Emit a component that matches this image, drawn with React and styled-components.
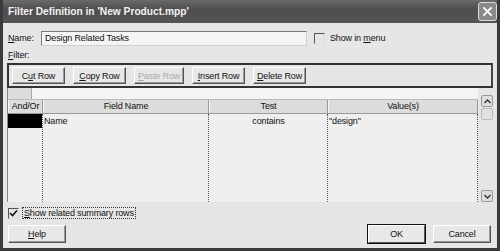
import React from "react";
import styled, { createGlobalStyle } from "styled-components";

const Global = createGlobalStyle`
  html, body { margin: 0; padding: 0; background: #2a2a2a; }
  * { box-sizing: border-box; }
`;

const Window = styled.div`
  width: 500px;
  height: 251px;
  background: #3a3a3a;
  padding: 0 3px 3px 3px;
  display: flex;
  flex-direction: column;
  font-family: "Liberation Sans", Arial, sans-serif;
  font-size: 9px;
  letter-spacing: -0.15px;
  color: #111;
  overflow: hidden;
`;

const TitleBar = styled.div`
  height: 23px;
  flex: none;
  display: flex;
  align-items: center;
  justify-content: space-between;
  padding: 0 0 0 5px;
  background: linear-gradient(#6a6a6a, #4e4e4e 40%, #555 100%);
  color: #f2f2f2;
  font-weight: bold;
  font-size: 10.2px;
  letter-spacing: 0;
`;

const CloseBox = styled.div`
  width: 19px;
  height: 19px;
  border: 1px solid #ddd;
  border-radius: 3px;
  background: #8a8a8a;
  display: flex;
  align-items: center;
  justify-content: center;
`;

const Body = styled.div`
  flex: 1;
  background: #e6e6e6;
  padding: 7px 4px 5px 4px;
  display: flex;
  flex-direction: column;
`;

const NameRow = styled.div`
  display: flex;
  align-items: center;
  height: 16px;
  margin-left: 1px;
`;

const Label = styled.span`
  width: 33px;
`;

const Field = styled.div`
  width: 266px;
  height: 15px;
  background: #f4f4f4;
  border: 1px solid #7a7a7a;
  border-right-color: #cfcfcf;
  border-bottom-color: #cfcfcf;
  padding: 1px 3px;
  line-height: 11px;
`;

const Check = styled.span`
  width: 11px;
  height: 11px;
  border: 1px solid #555;
  border-right-color: #ddd;
  border-bottom-color: #ddd;
  background: #e6e6e6;
  display: inline-flex;
  align-items: center;
  justify-content: center;
  flex: none;
`;

const CheckLabel = styled.label`
  display: flex;
  align-items: center;
  gap: 3px;
  margin-left: ${(p) => p.$ml || 0}px;
  span.text {
    border: ${(p) => (p.$focus ? "1px dotted #333" : "1px solid transparent")};
    padding: 0 1px;
  }
`;

const FilterLabel = styled.div`
  margin: 4px 0 3px 1px;
`;

const Toolbar = styled.div`
  height: 25px;
  border: 2px solid #333;
  border-right-color: #444;
  display: flex;
  align-items: center;
  gap: 8px;
  padding: 0 0 0 3px;
  background: #e6e6e6;
`;

const Btn = styled.div`
  width: ${(p) => p.$w || 53}px;
  height: ${(p) => p.$h || 17}px;
  display: flex;
  align-items: center;
  justify-content: center;
  white-space: nowrap;
  background: #e8e8e8;
  border: 1px solid #fff;
  border-right-color: #555;
  border-bottom-color: #555;
  box-shadow: ${(p) => (p.$default ? "0 0 0 1px #111" : "inset -1px -1px 0 #999")};
  color: ${(p) => (p.$disabled ? "#a8a8a8" : "#111")};
`;

const GridWrap = styled.div`
  display: flex;
  height: 114px;
  border-left: 1px solid #888;
`;

const Grid = styled.div`
  width: 470px;
  background: #efefef;
  display: flex;
  flex-direction: column;
`;

const EditRow = styled.div`
  height: 12px;
  display: flex;
  border-bottom: 1px solid #bbb;
  div:first-child { width: 24px; background: #dcdcdc; border-right: 1px solid #aaa; }
  div:last-child { flex: 1; background: #f4f4f4; }
`;

const cols = [35, 166, 119, 150];

const HeaderRow = styled.div`
  height: 14px;
  display: flex;
  background: #dcdcdc;
  border-bottom: 1px solid #999;
`;

const HeadCell = styled.div`
  width: ${(p) => p.$w}px;
  text-align: center;
  line-height: 13px;
  border-right: 1px solid #999;
  border-left: 1px solid #f6f6f6;
`;

const DataRow = styled.div`
  flex: 1;
  display: flex;
`;

const Cell = styled.div`
  width: ${(p) => p.$w}px;
  border-right: 1px dotted #555;
  display: flex;
  flex-direction: column;
  text-align: ${(p) => p.$align || "left"};
  span { height: 14px; line-height: 14px; padding-left: 1px; }
`;

const Selected = styled.span`
  background: #000;
  display: block;
`;

const ScrollBar = styled.div`
  width: 12px;
  margin-left: 3px;
  display: flex;
  flex-direction: column;
  justify-content: space-between;
  padding-top: 7px;
`;

const Arrow = styled.div`
  width: 12px;
  height: 12px;
  border: 1px solid #999;
  border-radius: 2px;
  background: #dedede;
  display: flex;
  align-items: center;
  justify-content: center;
`;

const Thumb = styled.div`
  width: 12px;
  height: 12px;
  border: 1px solid #bbb;
  border-radius: 2px;
  background: #e0e0e0;
  margin-top: 1px;
`;

const BottomRow = styled.div`
  display: flex;
  align-items: center;
  margin-top: auto;
  padding: 0 2px 0 1px;
`;

const Spacer = styled.div`
  flex: 1;
`;

function Chevron({ up }) {
  return (
    <svg width="7" height="5" viewBox="0 0 7 5">
      <path d={up ? "M0.5 4 L3.5 1 L6.5 4" : "M0.5 1 L3.5 4 L6.5 1"} fill="none" stroke="#333" strokeWidth="1.4" />
    </svg>
  );
}

function Tick() {
  return (
    <svg width="9" height="9" viewBox="0 0 9 9">
      <path d="M1 4 L3.5 6.5 L8 1.5" fill="none" stroke="#111" strokeWidth="1.6" />
    </svg>
  );
}

export default function App() {
  return (
    <>
      <Global />
      <Window>
        <TitleBar>
          <span>Filter Definition in 'New Product.mpp'</span>
          <CloseBox>
            <svg width="11" height="11" viewBox="0 0 12 12">
              <path d="M1.5 1.5 L10.5 10.5 M10.5 1.5 L1.5 10.5" stroke="#fff" strokeWidth="2" />
            </svg>
          </CloseBox>
        </TitleBar>
        <Body>
          <NameRow>
            <Label><u>N</u>ame:</Label>
            <Field>Design Related Tasks</Field>
            <CheckLabel $ml={7}>
              <Check />
              <span className="text">Show in <u>m</u>enu</span>
            </CheckLabel>
          </NameRow>
          <FilterLabel><u>F</u>ilter:</FilterLabel>
          <Toolbar>
            <Btn>C<u>u</u>t Row</Btn>
            <Btn><u>C</u>opy Row</Btn>
            <Btn $disabled $w={50}><u>P</u>aste Row</Btn>
            <Btn><u>I</u>nsert Row</Btn>
            <Btn><u>D</u>elete Row</Btn>
          </Toolbar>
          <GridWrap>
            <Grid>
              <EditRow><div /><div /></EditRow>
              <HeaderRow>
                <HeadCell $w={cols[0]}>And/Or</HeadCell>
                <HeadCell $w={cols[1]}>Field Name</HeadCell>
                <HeadCell $w={cols[2]}>Test</HeadCell>
                <HeadCell $w={cols[3]}>Value(s)</HeadCell>
              </HeaderRow>
              <DataRow>
                <Cell $w={cols[0]}><Selected /></Cell>
                <Cell $w={cols[1]}><span>Name</span></Cell>
                <Cell $w={cols[2]} $align="center"><span>contains</span></Cell>
                <Cell $w={cols[3]}><span>"design"</span></Cell>
              </DataRow>
            </Grid>
            <ScrollBar>
              <div>
                <Arrow><Chevron up /></Arrow>
                <Thumb />
              </div>
              <Arrow><Chevron /></Arrow>
            </ScrollBar>
          </GridWrap>
          <CheckLabel $focus style={{ marginTop: 5, marginLeft: 1 }}>
            <Check><Tick /></Check>
            <span className="text"><u>S</u>how related summary rows</span>
          </CheckLabel>
          <BottomRow>
            <Btn $w={58} $h={18}><u>H</u>elp</Btn>
            <Spacer />
            <Btn $w={57} $h={18} $default>OK</Btn>
            <Btn $w={58} $h={18} style={{ marginLeft: 8 }}>Cancel</Btn>
          </BottomRow>
        </Body>
      </Window>
    </>
  );
}
